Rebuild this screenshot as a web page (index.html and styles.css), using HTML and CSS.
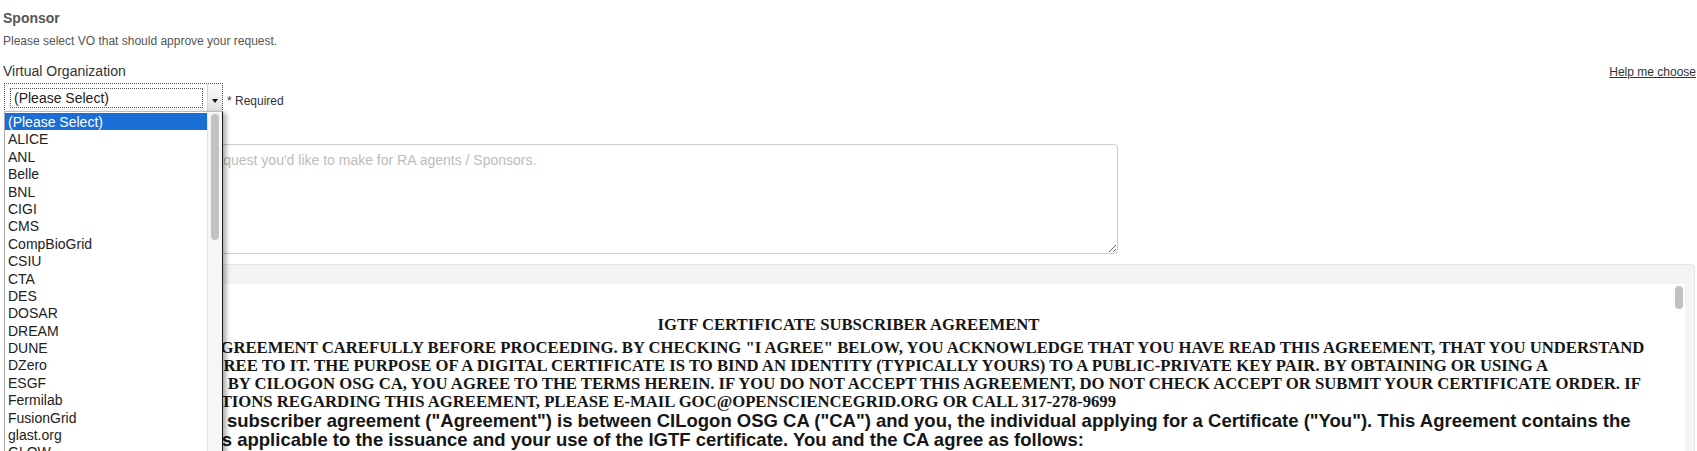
FILE: index.html
```html
<!DOCTYPE html>
<html lang="en">
<head>
<meta charset="utf-8">
<title>Sponsor</title>
<link rel="stylesheet" href="styles.css">
</head>
<body>
<div class="page">
  <h3 class="section-title">Sponsor</h3>
  <p class="hint">Please select VO that should approve your request.</p>
  <div class="label-row">
    <label class="field-label">Virtual Organization</label>
    <a class="help-link" href="#">Help me choose</a>
  </div>
  <div class="select-row">
    <div class="select">
      <span class="select-value">(Please Select)</span>
      <span class="select-arrow"><span class="caret"></span></span>
    </div>
    <span class="required">* Required</span>
  </div>
  <textarea class="comments" placeholder="Please enter any comments or request you'd like to make for RA agents / Sponsors."></textarea>
  <div class="well">
    <div class="agreement">
      <div class="agreement-title">IGTF CERTIFICATE SUBSCRIBER AGREEMENT</div>
      <p class="agreement-caps">PLEASE READ THIS AGREEMENT CAREFULLY BEFORE PROCEEDING. BY CHECKING "I AGREE" BELOW, YOU ACKNOWLEDGE THAT YOU HAVE READ THIS AGREEMENT, THAT YOU UNDERSTAND<br>IT, AND THAT YOU AGREE TO IT. THE PURPOSE OF A DIGITAL CERTIFICATE IS TO BIND AN IDENTITY (TYPICALLY YOURS) TO A PUBLIC-PRIVATE KEY PAIR. BY OBTAINING OR USING A<br>CERTIFICATE ISSUED BY CILOGON OSG CA, YOU AGREE TO THE TERMS HEREIN. IF YOU DO NOT ACCEPT THIS AGREEMENT, DO NOT CHECK ACCEPT OR SUBMIT YOUR CERTIFICATE ORDER. IF<br>YOU HAVE ANY QUESTIONS REGARDING THIS AGREEMENT, PLEASE E-MAIL GOC@OPENSCIENCEGRID.ORG OR CALL 317-278-9699</p>
      <p class="agreement-body">1. Introduction. This subscriber agreement ("Agreement") is between CILogon OSG CA ("CA") and you, the individual applying for a Certificate ("You"). This Agreement contains the<br>terms and conditions applicable to the issuance and your use of the IGTF certificate. You and the CA agree as follows:</p>
      <span class="agreement-thumb"></span>
    </div>
  </div>

  <div class="dropdown">
    <ul class="dropdown-list">
      <li class="dropdown-option is-selected">(Please Select)</li>
      <li class="dropdown-option">ALICE</li>
      <li class="dropdown-option">ANL</li>
      <li class="dropdown-option">Belle</li>
      <li class="dropdown-option">BNL</li>
      <li class="dropdown-option">CIGI</li>
      <li class="dropdown-option">CMS</li>
      <li class="dropdown-option">CompBioGrid</li>
      <li class="dropdown-option">CSIU</li>
      <li class="dropdown-option">CTA</li>
      <li class="dropdown-option">DES</li>
      <li class="dropdown-option">DOSAR</li>
      <li class="dropdown-option">DREAM</li>
      <li class="dropdown-option">DUNE</li>
      <li class="dropdown-option">DZero</li>
      <li class="dropdown-option">ESGF</li>
      <li class="dropdown-option">Fermilab</li>
      <li class="dropdown-option">FusionGrid</li>
      <li class="dropdown-option">glast.org</li>
      <li class="dropdown-option">GLOW</li>
      <li class="dropdown-option">GPN</li>
    </ul>
    <div class="dropdown-track"><span class="dropdown-thumb"></span></div>
  </div>
</div>
</body>
</html>
```
FILE: styles.css
```css
html, body {
  margin: 0;
  padding: 0;
  background: #fff;
  overflow: hidden;
}

body {
  font-family: "Liberation Sans", Arial, sans-serif;
  color: #333;
}

.page {
  position: relative;
  height: 451px;
  box-sizing: border-box;
  padding: 10px 1px 0 3px;
}

.section-title {
  margin: 0;
  font-size: 14px;
  line-height: 17px;
  font-weight: bold;
  color: #555;
}

.hint {
  margin: 7px 0 0;
  font-size: 12px;
  line-height: 15px;
  color: #555;
}

.label-row {
  margin-top: 14px;
  display: flex;
  justify-content: space-between;
  align-items: baseline;
  line-height: 17px;
}

.field-label {
  font-size: 14px;
  color: #333;
}

.help-link {
  font-size: 12px;
  color: #333;
  text-decoration: underline;
}

.select-row {
  margin-top: 2px;
  display: flex;
  align-items: flex-start;
}

.select {
  margin-left: 1px;
  width: 219px;
  height: 29px;
  box-sizing: border-box;
  border: 1px dotted #555;
  background: #fff;
  display: flex;
}

.select-value {
  flex: 1;
  margin: 4px 4px 3px 5px;
  border: 1px dotted #555;
  padding-left: 3px;
  font-size: 14px;
  line-height: 18px;
  color: #222;
}

.select-arrow {
  width: 14px;
  border-left: 1px solid #d4d4d4;
  background: linear-gradient(#fbfbfb, #e2e2e2);
  display: flex;
  justify-content: center;
}

.caret {
  margin-top: 15px;
  width: 0;
  height: 0;
  border-left: 3px solid transparent;
  border-right: 3px solid transparent;
  border-top: 4px solid #111;
}

.required {
  margin-left: 4px;
  padding-top: 11px;
  font-size: 12px;
  line-height: 15px;
  color: #333;
}

.comments {
  display: block;
  margin: 32px 0 0 1px;
  width: 1114px;
  height: 110px;
  box-sizing: border-box;
  border: 1px solid #ccc;
  border-radius: 4px;
  padding: 6px 12px;
  font-family: "Liberation Sans", Arial, sans-serif;
  font-size: 14px;
  line-height: 19px;
  color: #333;
  background: #fff;
  outline: none;
  resize: both;
}

.comments::placeholder {
  color: #bcbcbc;
}

.well {
  margin: 10px 1px 0 1px;
  height: 300px;
  box-sizing: border-box;
  border: 1px solid #e3e3e3;
  border-radius: 4px;
  background: #f4f4f4;
  padding: 19px 9px 9px;
}

.agreement {
  position: relative;
  height: 260px;
  overflow: hidden;
  background: #fff;
  padding: 32px 33px 0 31px;
  color: #161616;
}

.agreement-title {
  text-align: center;
  font-family: "Liberation Serif", "Times New Roman", serif;
  font-weight: bold;
  font-size: 16.7px;
  line-height: 18px;
  margin-bottom: 5px;
}

.agreement-caps {
  margin: 0;
  white-space: nowrap;
  font-family: "Liberation Serif", "Times New Roman", serif;
  font-weight: bold;
  font-size: 16.7px;
  line-height: 18px;
}

.agreement-body {
  margin: 0;
  white-space: nowrap;
  font-family: "Liberation Sans", Arial, sans-serif;
  font-weight: bold;
  font-size: 18.5px;
  line-height: 19px;
}

.agreement-thumb {
  position: absolute;
  top: 2px;
  right: 2px;
  width: 8px;
  height: 23px;
  border-radius: 4px;
  background: #c1c1c1;
}

.dropdown {
  position: absolute;
  top: 111px;
  left: 4px;
  height: 345px;
  display: flex;
  background: #fff;
  border-top: 1px solid #bdbdbd;
  border-left: 1px solid #adadad;
  border-right: 1px solid #1a1a1a;
  box-shadow: 3px 2px 5px rgba(0, 0, 0, 0.35);
  font-family: "Liberation Sans", Arial, sans-serif;
  font-size: 14px;
  color: #222;
}

.dropdown-list {
  width: 202px;
  margin: 0;
  padding: 1px 0 0;
  list-style: none;
}

.dropdown-option {
  height: 17.4px;
  box-sizing: border-box;
  padding: 2px 0 0 3px;
  line-height: 15.4px;
  white-space: nowrap;
}

.dropdown-option.is-selected {
  background: #1b6ed6;
  color: #fff;
}

.dropdown-track {
  position: relative;
  width: 14px;
  border-left: 1px solid #e4e4e4;
  background: #f6f6f6;
}

.dropdown-thumb {
  position: absolute;
  top: 2px;
  left: 3px;
  width: 8px;
  height: 126px;
  border-radius: 4px;
  background: #c2c2c2;
}
```
